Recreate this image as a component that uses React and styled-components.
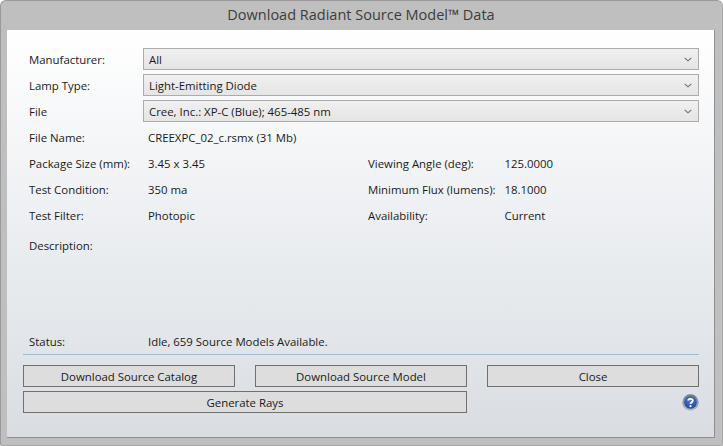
import React from "react";
import styled, { createGlobalStyle } from "styled-components";

const Global = createGlobalStyle`
  html, body { margin: 0; padding: 0; width: 723px; height: 446px; overflow: hidden; background: #fff; }
  * { box-sizing: border-box; }
`;

const Window = styled.div`
  width: 723px;
  height: 446px;
  display: flex;
  flex-direction: column;
  padding: 0 7px 7px 6px;
  background: #bfbfbf;
  border: 1px solid #9a9a9a;
  border-bottom-color: #a8a8a8;
  border-right-color: #a8a8a8;
  border-radius: 6px 6px 2px 2px;
  font-family: "Open Sans", "Noto Sans", sans-serif;
  color: #1a1a1a;
`;

const TitleBar = styled.div`
  height: 29px;
  flex: none;
  display: flex;
  align-items: center;
  justify-content: center;
  padding-bottom: 2px;
  font-size: 14.5px;
  color: #3c3c3c;
`;

const Panel = styled.div`
  flex: 1;
  display: flex;
  flex-direction: column;
  padding: 18px 15px 0 16px;
  background: linear-gradient(180deg, #ffffff 0%, #f3f5f7 30%, #d9dde2 100%);
  border-right: 1px solid #8f8f8f;
  border-bottom: 1px solid #8f8f8f;
  font-size: 11.4px;
`;

const SelectRow = styled.div`
  display: grid;
  grid-template-columns: 114px 556px;
  align-items: center;
  height: 22px;
  margin: 0 0 4px 6px;
`;

const Select = styled.div`
  height: 22px;
  display: flex;
  align-items: center;
  justify-content: space-between;
  padding: 0 6px 0 5px;
  border: 1px solid #acacac;
  background: linear-gradient(180deg, #f0f0f0, #e5e5e5);
`;

const InfoRow = styled.div`
  display: grid;
  grid-template-columns: ${(p) => (p.$wide ? "119px 220px 136.5px 1fr" : "119px 1fr")};
  align-items: center;
  height: 26px;
  margin-left: 6px;
  margin-top: ${(p) => p.$shift || 0}px;
`;

const Label = styled.span`
  white-space: nowrap;
`;

const Value = styled.span`
  white-space: nowrap;
`;

const Spacer = styled.div`
  flex: 1;
`;

const StatusRow = styled(InfoRow)`
  height: 23px;
  padding-bottom: 1px;
`;

const Rule = styled.div`
  height: 1px;
  margin-top: 1px;
  width: 676px;
  background: #9dbccf;
`;

const Actions = styled.div`
  display: grid;
  grid-template-columns: repeat(3, 212px);
  column-gap: 20px;
  row-gap: 4px;
  margin: 10px 0 24px;
`;

const Button = styled.button`
  height: 22px;
  padding: 0;
  border: 1px solid #707070;
  border-radius: 0;
  background: #dddddd;
  color: #1a1a1a;
  font-family: inherit;
  font-size: 11.4px;
  grid-column: ${(p) => (p.$span ? `span ${p.$span}` : "auto")};
`;

const HelpCell = styled.div`
  display: flex;
  justify-content: flex-end;
  align-items: center;
`;

const Chevron = () => (
  <svg width="8" height="5" viewBox="0 0 8 5" aria-hidden="true">
    <path d="M0.7 0.8 L4 3.8 L7.3 0.8" fill="none" stroke="#6d6d6d" strokeWidth="1.1" />
  </svg>
);

const HelpIcon = () => (
  <svg width="17" height="17" viewBox="0 0 17 17" aria-label="Help">
    <defs>
      <radialGradient id="blue" cx="0.5" cy="0.35" r="0.7">
        <stop offset="0" stopColor="#4f7fd8" />
        <stop offset="1" stopColor="#1c3f9c" />
      </radialGradient>
      <linearGradient id="ring" x1="0" y1="0" x2="0" y2="1">
        <stop offset="0" stopColor="#6f7885" />
        <stop offset="1" stopColor="#b4b9c2" />
      </linearGradient>
    </defs>
    <circle cx="8.5" cy="8.5" r="8.2" fill="url(#ring)" />
    <circle cx="8.5" cy="8.5" r="6.2" fill="url(#blue)" />
    <path d="M6.2 6.5 C6.3 4.4 10.8 4.3 10.8 6.6 C10.8 8.2 8.6 8.2 8.5 9.9" fill="none" stroke="#fff" strokeWidth="1.8" />
    <circle cx="8.5" cy="12.2" r="1.1" fill="#fff" />
  </svg>
);

export default function App() {
  return (
    <>
      <Global />
      <Window>
        <TitleBar>Download Radiant Source Model™ Data</TitleBar>
        <Panel>
          <SelectRow>
            <Label>Manufacturer:</Label>
            <Select>All<Chevron /></Select>
          </SelectRow>
          <SelectRow>
            <Label>Lamp Type:</Label>
            <Select>Light-Emitting Diode<Chevron /></Select>
          </SelectRow>
          <SelectRow>
            <Label>File</Label>
            <Select>Cree, Inc.: XP-C (Blue); 465-485 nm<Chevron /></Select>
          </SelectRow>
          <InfoRow $shift={-2}>
            <Label>File Name:</Label>
            <Value>CREEXPC_02_c.rsmx (31 Mb)</Value>
          </InfoRow>
          <InfoRow $wide>
            <Label>Package Size (mm):</Label>
            <Value>3.45 x 3.45</Value>
            <Label>Viewing Angle (deg):</Label>
            <Value>125.0000</Value>
          </InfoRow>
          <InfoRow $wide>
            <Label>Test Condition:</Label>
            <Value>350 ma</Value>
            <Label>Minimum Flux (lumens):</Label>
            <Value>18.1000</Value>
          </InfoRow>
          <InfoRow $wide>
            <Label>Test Filter:</Label>
            <Value>Photopic</Value>
            <Label>Availability:</Label>
            <Value>Current</Value>
          </InfoRow>
          <InfoRow $shift={4}>
            <Label>Description:</Label>
          </InfoRow>
          <Spacer />
          <StatusRow>
            <Label>Status:</Label>
            <Value>Idle, 659 Source Models Available.</Value>
          </StatusRow>
          <Rule />
          <Actions>
            <Button>Download Source Catalog</Button>
            <Button>Download Source Model</Button>
            <Button>Close</Button>
            <Button $span={2}>Generate Rays</Button>
            <HelpCell><HelpIcon /></HelpCell>
          </Actions>
        </Panel>
      </Window>
    </>
  );
}
